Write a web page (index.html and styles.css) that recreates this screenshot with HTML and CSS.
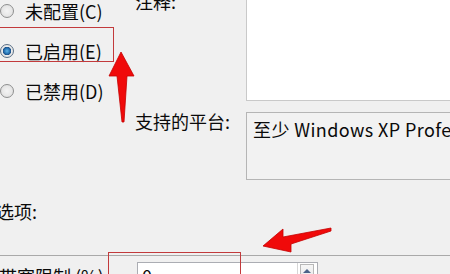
FILE: index.html
```html
<!DOCTYPE html>
<html lang="zh-CN">
<head>
<meta charset="utf-8">
<link rel="stylesheet" href="styles.css">
</head>
<body>
<div class="page">
  <div class="top">
    <div class="radios">
      <div class="radio"><span class="dot"></span><span>未配置(C)</span></div>
      <div class="radio"><span class="dot checked"></span><span>已启用(E)</span></div>
      <div class="radio"><span class="dot"></span><span>已禁用(D)</span></div>
    </div>
    <div class="fields">
      <div class="label">注释:</div>
      <div class="comment"></div>
      <div class="label label-platform">支持的平台:</div>
      <div class="platform">至少 Windows XP Professional</div>
    </div>
  </div>
  <div class="options-title">选项:</div>
  <div class="options">
    <div class="opt-row">
      <div class="opt-label">带宽限制 (%):</div>
      <div class="spin">
        <span class="spin-value">0</span>
        <span class="spin-btns"><span class="spin-up"></span></span>
      </div>
    </div>
  </div>
</div>
<div class="mark mark-enabled"></div>
<div class="mark mark-input"></div>
<svg class="arrows" width="450" height="274" viewBox="0 0 450 274">
  <path d="M121 52 L134 76 L127 76 L124 122 L122 122 L117 76 L109 76 Z" fill="#f00a0a" stroke="#c40000" stroke-width="0.8" stroke-linejoin="round"/>
  <path d="M263 246 L283 229 L283 237 L331 228 L331 231 L291 244 L291 252 Z" fill="#f00a0a" stroke="#c40000" stroke-width="0.8" stroke-linejoin="round"/>
</svg>
</body>
</html>
```
FILE: styles.css
```css
html, body {
  margin: 0;
  padding: 0;
}
body {
  width: 450px;
  height: 274px;
  overflow: hidden;
  background: #f0f0f0;
  position: relative;
  font-family: "Noto Sans CJK SC", "Noto Sans", sans-serif;
  font-size: 18px;
  color: #0a0a0a;
}
.page {
  display: flex;
  flex-direction: column;
}
.top {
  display: flex;
  align-items: flex-start;
}
.radios {
  width: 135px;
  flex: none;
  display: flex;
  flex-direction: column;
  margin-top: -9px;
}
.radio {
  height: 40px;
  display: flex;
  align-items: center;
  gap: 11px;
  white-space: nowrap;
}
.dot {
  width: 12px;
  height: 12px;
  border-radius: 50%;
  border: 1px solid #8e8f8f;
  background: radial-gradient(circle at 50% 50%, #f4f4f4 0, #e6e6e6 60%, #d8d8d8 100%);
  flex: none;
}
.dot.checked {
  background:
    radial-gradient(circle at 50% 50%, #5fb4e6 0, #2a77b8 2.5px, #1c4f86 4px, transparent 4.5px),
    radial-gradient(circle at 50% 50%, #f4f4f4 0, #e2e2e2 100%);
  border-color: #5a6f86;
}
.fields {
  flex: none;
  width: 330px;
  display: grid;
  grid-template-columns: 111px 1fr;
  grid-template-rows: 111px 68px;
  row-gap: 11px;
  margin-top: -10px;
}
.label {
  line-height: 22px;
  white-space: nowrap;
}
.label-platform {
  line-height: 18px;
}
.comment {
  background: #fff;
  border: 1px solid #c9c9c9;
  border-top: none;
  border-right: none;
}
.platform {
  border: 1px solid #b5b5b5;
  border-right: none;
  background: #f2f2f2;
  padding: 6px 0 0 6px;
  line-height: 20px;
  letter-spacing: 0.4px;
  white-space: nowrap;
  overflow: hidden;
}
.options-title {
  margin-top: 21px;
  margin-left: -4px;
  line-height: 20px;
}
.options {
  margin-top: 34px;
  margin-left: -20px;
  width: 461px;
  border: 1px solid #a9a9a9;
  border-bottom: none;
  padding: 6px 0 0 18px;
  height: 40px;
}
.opt-row {
  display: flex;
  align-items: flex-start;
}
.opt-label {
  width: 138px;
  flex: none;
  line-height: 24px;
  padding-top: 2px;
  white-space: nowrap;
}
.spin {
  width: 179px;
  height: 22px;
  border: 1px solid #abadb3;
  background: #fff;
  display: flex;
  justify-content: space-between;
}
.spin-value {
  padding-left: 4px;
  line-height: 26px;
}
.spin-btns {
  width: 20px;
  padding: 1px 3px 0 2px;
  border-left: 1px solid #d6d6d6;
  box-sizing: border-box;
}
.spin-up {
  display: flex;
  justify-content: center;
  padding-top: 4px;
  height: 20px;
  box-sizing: border-box;
  border: 1px solid #b8b8b8;
  border-bottom: none;
  background: linear-gradient(#f6f6f6, #e4e4e4);
}
.spin-up::before {
  content: "";
  width: 0;
  height: 0;
  border-left: 4px solid transparent;
  border-right: 4px solid transparent;
  border-bottom: 4px solid #4a6389;
}
.mark {
  position: absolute;
  border: 1.5px solid #c23a3c;
}
.mark-enabled {
  left: -4px;
  top: 27px;
  width: 116px;
  height: 33px;
}
.mark-input {
  left: 108px;
  top: 252px;
  width: 131px;
  height: 40px;
}
.arrows {
  position: absolute;
  left: 0;
  top: 0;
}
```
